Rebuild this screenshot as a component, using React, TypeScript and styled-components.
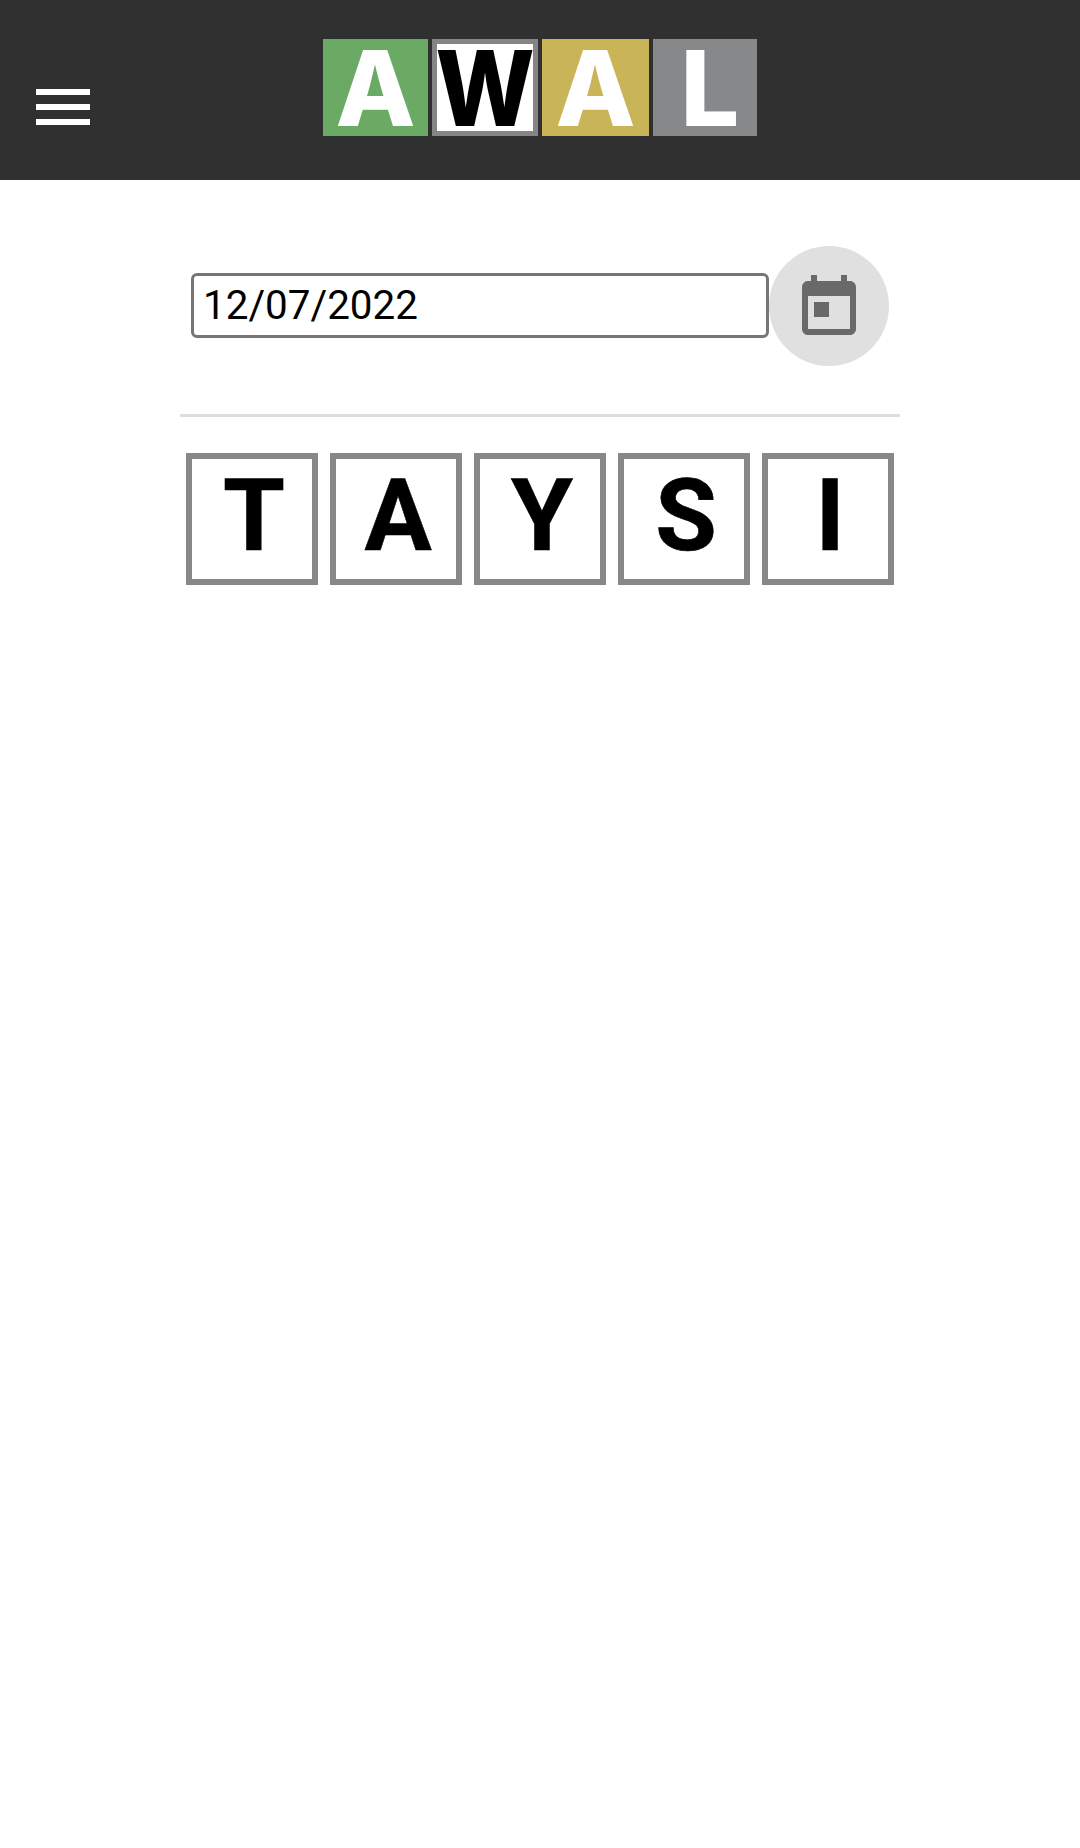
import styled, { createGlobalStyle } from "styled-components";

const GlobalStyle = createGlobalStyle`
  html, body {
    margin: 0;
    padding: 0;
    background: #ffffff;
    font-family: Roboto, "Liberation Sans", sans-serif;
  }
`;

const Page = styled.div`
  width: 1080px;
  min-height: 1848px;
  background: #ffffff;
`;

const Header = styled.header`
  display: grid;
  grid-template-columns: 1fr auto 1fr;
  align-items: start;
  height: 180px;
  background: #303030;
`;

const MenuButton = styled.button`
  justify-self: start;
  display: flex;
  width: 72px;
  height: 72px;
  margin: 71px 0 0 27px;
  padding: 0;
  border: none;
  background: none;
  color: #ffffff;
`;

const Logo = styled.div`
  display: flex;
  gap: 4px;
  margin-top: 39px;
  filter: blur(0.4px);
`;

const LogoTile = styled.div<{ $bg: string; $fg: string; $width: number; $border?: string }>`
  display: flex;
  align-items: center;
  justify-content: center;
  box-sizing: border-box;
  width: ${({ $width }) => $width}px;
  height: 97px;
  background: ${({ $bg }) => $bg};
  color: ${({ $fg }) => $fg};
  border: ${({ $border }) => ($border ? `5px solid ${$border}` : "none")};
  font-family: Inter, "Liberation Sans", sans-serif;
  font-size: 104px;
  font-weight: 800;
  line-height: 1;
`;

const NarrowLetter = styled.span`
  display: inline-block;
  transform: scaleX(0.9);
`;

const ShiftedLetter = styled.span`
  display: inline-block;
  transform: translateX(5px);
`;

const Main = styled.main`
  width: 720px;
  margin: 0 auto;
`;

const DateRow = styled.div`
  display: flex;
  align-items: flex-start;
  height: 120px;
  margin-top: 66px;
  padding: 0 10px 48px 11px;
  border-bottom: 3px solid #dddddd;
`;

const DateInput = styled.input`
  flex: none;
  box-sizing: border-box;
  width: 578px;
  height: 65px;
  margin-top: 27px;
  padding: 0 9px;
  border: 3px solid #767676;
  border-radius: 6px;
  outline: none;
  background: #ffffff;
  color: #000000;
  font-family: Roboto, sans-serif;
  font-size: 40.4px;
`;

const CalendarButton = styled.button`
  flex: none;
  display: flex;
  align-items: center;
  justify-content: center;
  width: 120px;
  height: 120px;
  padding: 4px 0 0;
  border: none;
  border-radius: 50%;
  background: #e0e0e0;
  color: #696969;
`;

const TileRow = styled.div`
  display: flex;
  justify-content: center;
  gap: 12px;
  margin-top: 36px;
`;

const Tile = styled.div`
  display: flex;
  align-items: center;
  justify-content: center;
  box-sizing: border-box;
  width: 132px;
  height: 132px;
  padding: 0 0 7px 4px;
  border: 6px solid #888888;
  color: #000000;
  font-family: Roboto, sans-serif;
  font-size: 100px;
  font-weight: 700;
  line-height: 1;
  -webkit-text-stroke: 0.6px #000000;
`;

const word = ["T", "A", "Y", "S", "I"];

export default function App() {
  return (
    <Page>
      <GlobalStyle />
      <Header>
        <MenuButton type="button" aria-label="Menu">
          <svg width="72" height="72" viewBox="0 0 24 24" fill="currentColor">
            <path d="M3 18h18v-2H3v2zm0-5h18v-2H3v2zm0-7v2h18V6H3z" />
          </svg>
        </MenuButton>
        <Logo>
          <LogoTile $bg="#6aaa64" $fg="#ffffff" $width={105}>A</LogoTile>
          <LogoTile $bg="#ffffff" $fg="#000000" $width={106} $border="#858585">
            <NarrowLetter>W</NarrowLetter>
          </LogoTile>
          <LogoTile $bg="#c9b458" $fg="#ffffff" $width={107}>A</LogoTile>
          <LogoTile $bg="#86888a" $fg="#ffffff" $width={104}>
            <ShiftedLetter>L</ShiftedLetter>
          </LogoTile>
        </Logo>
      </Header>
      <Main>
        <DateRow>
          <DateInput type="text" value="12/07/2022" readOnly />
          <CalendarButton type="button" aria-label="Choose date">
            <svg width="72" height="72" viewBox="0 0 24 24" fill="currentColor">
              <path d="M19 3h-1V1h-2v2H8V1H6v2H5c-1.11 0-1.99.9-1.99 2L3 19c0 1.1.89 2 2 2h14c1.1 0 2-.9 2-2V5c0-1.1-.9-2-2-2zm0 16H5V8h14v11zM7 10h5v5H7z" />
            </svg>
          </CalendarButton>
        </DateRow>
        <TileRow>
          {word.map((letter, index) => (
            <Tile key={index}>{letter}</Tile>
          ))}
        </TileRow>
      </Main>
    </Page>
  );
}
